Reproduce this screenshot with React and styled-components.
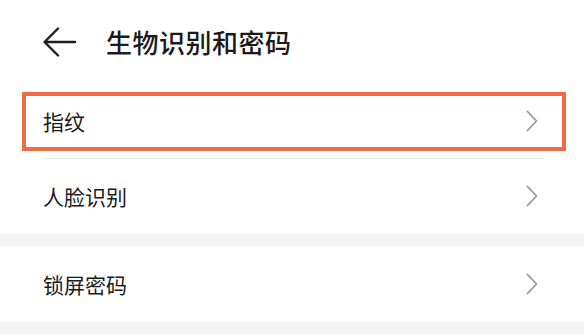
import React from 'react';
import styled, { createGlobalStyle } from 'styled-components';

const GlobalStyle = createGlobalStyle`
  html, body {
    margin: 0;
    padding: 0;
    background: #ffffff;
  }
  body {
    font-family: "Noto Sans CJK SC", "Noto Sans", sans-serif;
    color: #1a1a1a;
  }
`;

const Page = styled.div`
  width: 584px;
  height: 336px;
  overflow: hidden;
  background: #ffffff;
`;

const Header = styled.div`
  height: 84px;
  display: flex;
  align-items: center;
  padding-left: 43px;
  box-sizing: border-box;
`;

const BackButton = styled.div`
  width: 34px;
  height: 30px;
  display: flex;
  align-items: center;
  margin-right: 29px;
`;

const Title = styled.h1`
  margin: 0;
  font-size: 26px;
  font-weight: 500;
  letter-spacing: 0.5px;
  color: #1a1a1a;
  line-height: 1;
`;

const Group = styled.div`
  background: #ffffff;
`;

const Gap = styled.div`
  height: 14px;
  background: #f5f5f5;
`;

const Row = styled.div`
  position: relative;
  height: 74px;
  display: flex;
  align-items: center;
  justify-content: space-between;
  padding: 0 46px 0 43px;
  box-sizing: border-box;
`;

const Label = styled.span`
  font-size: 21px;
  color: #1a1a1a;
  line-height: 1;
`;

const Divider = styled.div`
  height: 1px;
  margin: 0 40px 0 42px;
  background: #ebebeb;
`;

const Highlight = styled.div`
  position: absolute;
  left: 22px;
  right: 18px;
  top: 8px;
  bottom: 7px;
  border: 4px solid #ef6d44;
  pointer-events: none;
`;

const BackArrow = () => (
  <svg width="34" height="30" viewBox="0 0 34 30">
    <path
      d="M32 15 H2 M15 1.5 L1.5 15 L15 28.5"
      fill="none"
      stroke="#1f1f1f"
      strokeWidth="2.4"
      strokeLinecap="round"
      strokeLinejoin="round"
    />
  </svg>
);

const Chevron = () => (
  <svg width="12" height="22" viewBox="0 0 12 22">
    <path
      d="M1.5 1.5 L10.5 11 L1.5 20.5"
      fill="none"
      stroke="#999999"
      strokeWidth="1.8"
      strokeLinecap="round"
      strokeLinejoin="round"
    />
  </svg>
);

const items = [
  { group: 0, label: '指纹', highlighted: true },
  { group: 0, label: '人脸识别' },
  { group: 1, label: '锁屏密码' },
];

export default function App() {
  const groups = [0, 1].map(g => items.filter(i => i.group === g));
  return (
    <Page>
      <GlobalStyle />
      <Header>
        <BackButton>
          <BackArrow />
        </BackButton>
        <Title>生物识别和密码</Title>
      </Header>
      {groups.map((list, gi) => (
        <React.Fragment key={gi}>
          <Group>
            {list.map((item, i) => (
              <React.Fragment key={item.label}>
                {i > 0 && <Divider />}
                <Row>
                  <Label>{item.label}</Label>
                  <Chevron />
                  {item.highlighted && <Highlight />}
                </Row>
              </React.Fragment>
            ))}
          </Group>
          <Gap />
        </React.Fragment>
      ))}
    </Page>
  );
}
